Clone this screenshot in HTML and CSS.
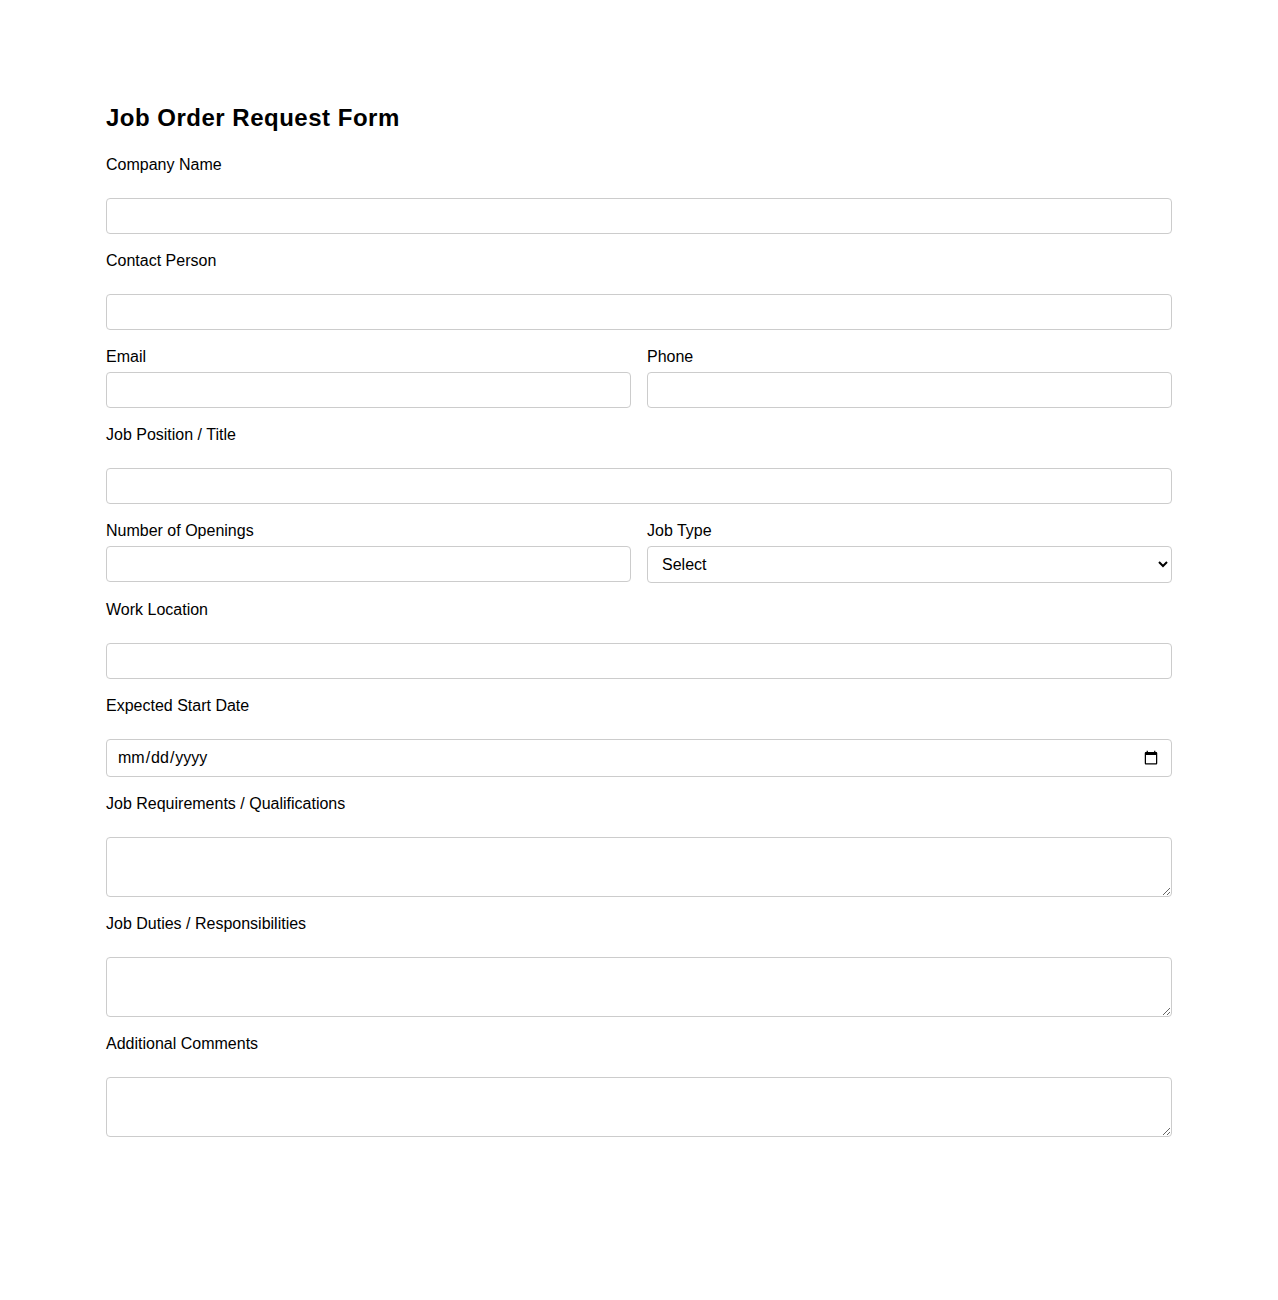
FILE: index.html
```html
<!DOCTYPE html>
<html lang="en">
<head>
<meta charset="utf-8">
<title>Job Order Request Form</title>
<link rel="stylesheet" href="styles.css">
</head>
<body>
<main class="page">
  <h1 class="title">Job Order Request Form</h1>
  <form class="form">
    <div class="field">
      <label class="label" for="company">Company Name</label>
      <input class="control" id="company" type="text">
    </div>
    <div class="field">
      <label class="label" for="contact">Contact Person</label>
      <input class="control" id="contact" type="text">
    </div>
    <div class="row">
      <div class="col">
        <label class="label label-tight" for="email">Email</label>
        <input class="control" id="email" type="email">
      </div>
      <div class="col">
        <label class="label label-tight" for="phone">Phone</label>
        <input class="control" id="phone" type="tel">
      </div>
    </div>
    <div class="field">
      <label class="label" for="position">Job Position / Title</label>
      <input class="control" id="position" type="text">
    </div>
    <div class="row">
      <div class="col">
        <label class="label label-tight" for="openings">Number of Openings</label>
        <input class="control" id="openings" type="number">
      </div>
      <div class="col">
        <label class="label label-tight" for="jobtype">Job Type</label>
        <select class="control select" id="jobtype">
          <option>Select</option>
          <option>Full-time</option>
          <option>Part-time</option>
          <option>Contract</option>
        </select>
      </div>
    </div>
    <div class="field">
      <label class="label" for="location">Work Location</label>
      <input class="control" id="location" type="text">
    </div>
    <div class="field">
      <label class="label" for="start">Expected Start Date</label>
      <input class="control date" id="start" type="date">
    </div>
    <div class="field">
      <label class="label" for="req">Job Requirements / Qualifications</label>
      <textarea class="control area" id="req"></textarea>
    </div>
    <div class="field">
      <label class="label" for="duties">Job Duties / Responsibilities</label>
      <textarea class="control area" id="duties"></textarea>
    </div>
    <div class="field">
      <label class="label" for="comments">Additional Comments</label>
      <textarea class="control area" id="comments"></textarea>
    </div>
  </form>
</main>
</body>
</html>
```
FILE: styles.css
```css
html, body {
  margin: 0;
  padding: 0;
  background: #ffffff;
}

body {
  font-family: "Liberation Sans", Arial, sans-serif;
  color: #000000;
  font-size: 16px;
}

.page {
  max-width: 1066px;
  margin: 0 auto;
  padding-top: 104px;
  padding-bottom: 100px;
}

.title {
  margin: 0 0 23px 0;
  font-size: 24px;
  line-height: 28px;
  font-weight: 700;
  letter-spacing: 0.5px;
}

.form {
  display: flex;
  flex-direction: column;
  gap: 17px;
}

.field {
  display: flex;
  flex-direction: column;
}

.row {
  display: grid;
  grid-template-columns: 1fr 1fr;
  column-gap: 16px;
}

.col {
  display: flex;
  flex-direction: column;
}

.label {
  display: block;
  font-size: 16px;
  line-height: 18px;
  padding-top: 1px;
  margin-bottom: 24px;
}

.label-tight {
  margin-bottom: 6px;
}

.control {
  box-sizing: border-box;
  width: 100%;
  height: 36px;
  margin: 0;
  padding: 8px 10px;
  border: 1px solid #cccccc;
  border-radius: 4px;
  font-family: "Liberation Sans", Arial, sans-serif;
  font-size: 16px;
  color: #000000;
  background: #ffffff;
}

.select {
  height: 37px;
}

.date {
  height: 38px;
}

.area {
  height: 60px;
  resize: vertical;
}
```
